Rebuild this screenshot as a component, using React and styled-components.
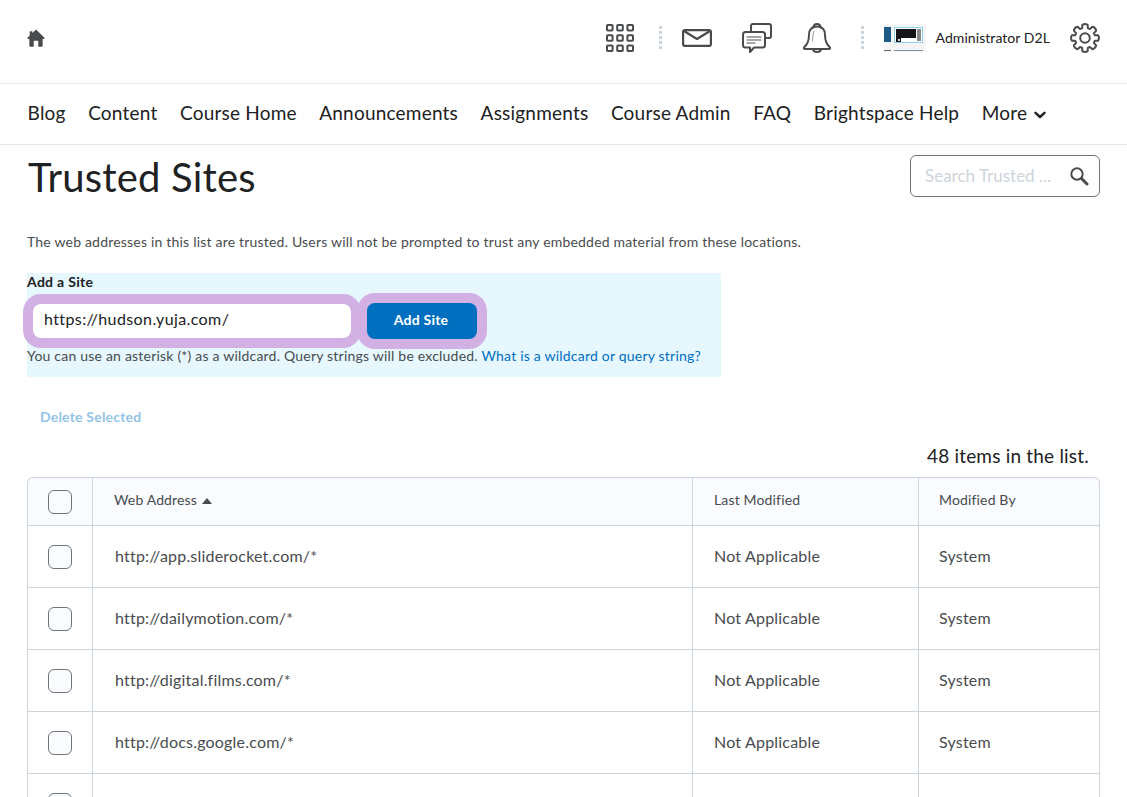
import React from 'react'
import styled, { createGlobalStyle } from 'styled-components'

const GlobalStyle = createGlobalStyle`
  html, body {
    margin: 0;
    height: 100%;
    overflow: hidden;
    background: #fff;
    font-family: Lato, "Open Sans", sans-serif;
    color: #202122;
  }
`

const navLinks = ['Blog', 'Content', 'Course Home', 'Announcements', 'Assignments', 'Course Admin', 'FAQ', 'Brightspace Help']

const rows = [
  'http://app.sliderocket.com/*',
  'http://dailymotion.com/*',
  'http://digital.films.com/*',
  'http://docs.google.com/*',
]

// 8 tooth cog outline, rounded off by the stroke join
function gearPath() {
  const pt = (r, a) => (15 + r * Math.cos(a)).toFixed(2) + ' ' + (15 + r * Math.sin(a)).toFixed(2)
  let d = ''
  for (let i = 0; i < 8; i++) {
    const a = (i * Math.PI) / 4 - Math.PI / 2
    d += (i === 0 ? 'M' : 'L') + pt(10.2, a - 0.28)
    d += 'L' + pt(13.4, a - 0.2)
    d += 'Q' + pt(14.8, a) + ' ' + pt(13.4, a + 0.2)
    d += 'L' + pt(10.2, a + 0.28)
    d += 'Q' + pt(10, a + Math.PI / 8) + ' ' + pt(10.2, a + Math.PI / 4 - 0.28)
  }
  return d + 'Z'
}

function HomeIcon() {
  return (
    <svg width="18" height="18" viewBox="0 0 20 20" fill="#494c4e">
      <path d="M10 .6 L19.4 9.6 Q19.9 10.8 19 11 H17.4 V18.4 Q17.4 19.6 16.2 19.6 H12.5 V13 H7.5 V19.6 H3.8 Q2.6 19.6 2.6 18.4 V11 H1 Q.1 10.8 .6 9.6 L3 7.3 V2.6 H6 V4.4 Z" />
    </svg>
  )
}

function GridIcon() {
  const cells = []
  for (let y = 0; y < 3; y++) {
    for (let x = 0; x < 3; x++) {
      cells.push(<rect key={x + '-' + y} x={1 + x * 10.2} y={1 + y * 10.2} width="5.6" height="5.6" rx="0.8" />)
    }
  }
  return (
    <svg width="28" height="28" viewBox="0 0 28 28" fill="none" stroke="#494c4e" strokeWidth="2">
      {cells}
    </svg>
  )
}

function MailIcon() {
  return (
    <svg width="30" height="18" viewBox="0 0 30 18" fill="none" stroke="#494c4e" strokeWidth="2.2" strokeLinejoin="round" strokeLinecap="round">
      <rect x="1.1" y="1.1" width="27.8" height="15.8" rx="2" />
      <path d="M2 2 L15 10 L28 2" />
    </svg>
  )
}

function ChatIcon() {
  return (
    <svg width="30" height="30" viewBox="0 0 30 30" fill="none" stroke="#494c4e" strokeWidth="2" strokeLinejoin="round" strokeLinecap="round">
      <path d="M9 8 V3 Q9 1 11 1 H27 Q29 1 29 3 V13 Q29 15 27 15 H24" />
      <path d="M3.5 9 H20.5 Q23 9 23 11.5 V22 Q23 24.5 20.5 24.5 H12 L8 29 V24.5 H3.5 Q1 24.5 1 22 V11.5 Q1 9 3.5 9 Z" />
      <path d="M5 14 H19 M5 17 H19 M5 20 H13" strokeWidth="1" />
    </svg>
  )
}

function BellIcon() {
  return (
    <svg width="30" height="30" viewBox="0 0 30 30" fill="none" stroke="#494c4e" strokeWidth="2" strokeLinejoin="round" strokeLinecap="round">
      <path d="M11.5 4.5 Q11.5 1 15 1 Q18.5 1 18.5 4.5" />
      <path d="M15 3.5 Q23 3.5 23 12 Q23 20 28 24.5 Q28.4 26 27 26 H3 Q1.6 26 2 24.5 Q7 20 7 12 Q7 3.5 15 3.5 Z" />
      <path d="M11 26 Q11.5 29 15 29 Q18.5 29 19 26" />
      <path d="M10.5 18 Q10.5 11 12 8" strokeWidth="1" stroke="#999" />
    </svg>
  )
}

function GearIcon() {
  return (
    <svg width="30" height="30" viewBox="0 0 30 30" fill="none" stroke="#494c4e" strokeWidth="2" strokeLinejoin="round">
      <circle cx="15" cy="15" r="4.8" />
      <path d={gearPath()} />
    </svg>
  )
}

function Thumbnail() {
  return (
    <svg width="42" height="28" viewBox="0 0 42 28">
      <rect width="42" height="28" fill="#f5f5f5" />
      <rect x="0" y="3" width="7" height="15" fill="#1d5a86" />
      <rect x="10" y="3" width="29" height="16" fill="#8fd0ea" />
      <rect x="11" y="4" width="27" height="14" fill="#fff" />
      <rect x="12" y="5" width="20" height="9" fill="#141418" />
      <rect x="12" y="14" width="5" height="4" fill="#141418" />
      <rect x="14" y="15" width="2" height="2" fill="#ddd" />
      <rect x="33" y="5" width="4" height="12" fill="#8a8a8a" />
      <rect x="0" y="26" width="7" height="1" fill="#666" />
      <rect x="10" y="26" width="29" height="1" fill="#7f97a8" />
    </svg>
  )
}

function SearchIcon() {
  return (
    <svg width="20" height="20" viewBox="0 0 20 20" fill="none" stroke="#494c4e" strokeLinecap="round">
      <circle cx="8" cy="8" r="5.7" strokeWidth="2" />
      <path d="M12.5 12.5 L18 18" strokeWidth="3" />
    </svg>
  )
}

function Chevron() {
  return (
    <svg width="12" height="8" viewBox="0 0 12 8" fill="none" stroke="#202122" strokeWidth="2.4" strokeLinecap="round" strokeLinejoin="round">
      <path d="M1.5 1.8 L6 6 L10.5 1.8" />
    </svg>
  )
}

function App() {
  return (
    <Page>
      <GlobalStyle />
      <TopBar>
        <HomeIcon />
        <TopActions>
          <GridSlot><GridIcon /></GridSlot>
          <Dots />
          <IconGroup>
            <MailIcon />
            <ChatIcon />
            <BellIcon />
          </IconGroup>
          <Dots />
          <Profile>
            <Thumbnail />
            <ProfileName>Administrator D2L</ProfileName>
          </Profile>
          <GearIcon />
        </TopActions>
      </TopBar>

      <NavBar>
        {navLinks.map((link) => (
          <NavLink key={link}>{link}</NavLink>
        ))}
        <NavLink>
          More <Chevron />
        </NavLink>
      </NavBar>

      <Content>
        <TitleRow>
          <Title>Trusted Sites</Title>
          <SearchBox>
            <SearchHint>Search Trusted ...</SearchHint>
            <SearchIcon />
          </SearchBox>
        </TitleRow>

        <Intro>The web addresses in this list are trusted. Users will not be prompted to trust any embedded material from these locations.</Intro>

        <AddPanel>
          <AddLabel>Add a Site</AddLabel>
          <AddRow>
            <SiteInput>https://hudson.yuja.com/</SiteInput>
            <AddButton>Add Site</AddButton>
          </AddRow>
          <Hint>
            You can use an asterisk (*) as a wildcard. Query strings will be excluded. <HintLink>What is a wildcard or query string?</HintLink>
          </Hint>
        </AddPanel>

        <DeleteLink>Delete Selected</DeleteLink>
        <ItemCount>48 items in the list.</ItemCount>

        <Table>
          <colgroup>
            <col style={{ width: 64 }} />
            <col style={{ width: 600 }} />
            <col style={{ width: 226 }} />
            <col />
          </colgroup>
          <thead>
            <tr>
              <HeadCell $center><Check /></HeadCell>
              <HeadCell>Web Address <SortArrow /></HeadCell>
              <HeadCell>Last Modified</HeadCell>
              <HeadCell>Modified By</HeadCell>
            </tr>
          </thead>
          <tbody>
            {rows.map((url) => (
              <tr key={url}>
                <BodyCell $center><Check /></BodyCell>
                <BodyCell>{url}</BodyCell>
                <BodyCell>Not Applicable</BodyCell>
                <BodyCell>System</BodyCell>
              </tr>
            ))}
            <tr>
              <BodyCell $center><Check /></BodyCell>
              <BodyCell />
              <BodyCell />
              <BodyCell />
            </tr>
          </tbody>
        </Table>
      </Content>
    </Page>
  )
}

const Page = styled.div`
  width: 1127px;
  height: 797px;
  overflow: hidden;
`

const TopBar = styled.header`
  height: 75px;
  border-bottom: 1px solid #e6e7e9;
  padding: 0 27px 8px 27px;
  display: flex;
  align-items: center;
  justify-content: space-between;
`

const TopActions = styled.div`
  display: flex;
  align-items: center;
  gap: 20px;
`

const GridSlot = styled.div`
  display: flex;
  margin-right: 5px;
`

const IconGroup = styled.div`
  display: flex;
  align-items: center;
  gap: 30px;
  margin-right: 9px;
`

const Dots = styled.span`
  width: 3px;
  height: 25px;
  background-image: radial-gradient(circle, #cdd5dc 1.5px, transparent 1.6px);
  background-size: 3px 5px;
`

const Profile = styled.div`
  display: flex;
  align-items: center;
  gap: 10px;
`

const ProfileName = styled.span`
  font-size: 14px;
  letter-spacing: 0.06px;
  color: #202122;
`

const NavBar = styled.nav`
  height: 56px;
  border-bottom: 1px solid #e6e7e9;
  padding: 0 27.6px 4px;
  display: flex;
  align-items: center;
  gap: 22.6px;
`

const NavLink = styled.a`
  font-size: 19px;
  letter-spacing: 0.2px;
  color: #202122;
  white-space: nowrap;

  svg {
    margin-left: 2px;
    vertical-align: 1px;
  }
`

const Content = styled.main`
  padding: 0 27px;
`

const TitleRow = styled.div`
  height: 71px;
  display: flex;
  justify-content: space-between;
  align-items: flex-start;
  background: linear-gradient(#f9fafb, #fff 6px);
  margin: 0 -27px;
  padding: 0 27px;
`

const Title = styled.h1`
  margin: 8px 0 0 1px;
  font-size: 40px;
  line-height: 48px;
  font-weight: 400;
  letter-spacing: 0.2px;
  color: #202122;
`

const SearchBox = styled.div`
  width: 190px;
  height: 42px;
  margin-top: 10px;
  box-sizing: border-box;
  border: 1px solid #6e7477;
  border-radius: 6px;
  background: #fff;
  padding: 0 10px 0 14px;
  display: flex;
  align-items: center;
  justify-content: space-between;
`

const SearchHint = styled.span`
  font-size: 17px;
  padding-bottom: 1px;
  color: #cdd5dc;
`

const Intro = styled.p`
  margin: 0;
  height: 57px;
  padding-top: 17px;
  box-sizing: border-box;
  font-size: 14px;
  letter-spacing: 0.2px;
  line-height: 18px;
  color: #494c4e;
`

const AddPanel = styled.section`
  width: 694px;
  height: 104px;
  background: #e6f7fe;
`

const AddLabel = styled.div`
  height: 20px;
  font-size: 14px;
  letter-spacing: 0.3px;
  line-height: 18px;
  font-weight: 700;
  color: #202122;
`

const AddRow = styled.div`
  padding-top: 11px;
  height: 35px;
  display: flex;
  align-items: flex-start;
  gap: 16px;
  margin-left: 6px;
`

const SiteInput = styled.div`
  width: 318px;
  height: 34px;
  box-sizing: border-box;
  padding-left: 11px;
  border-radius: 8px;
  background: #fff;
  box-shadow: 0 0 0 10px #d2b0e4;
  font-size: 16px;
  line-height: 30px;
  letter-spacing: 0.4px;
  color: #202122;
`

const AddButton = styled.button`
  width: 110px;
  height: 36px;
  margin-top: -1px;
  border: 0;
  border-radius: 8px;
  padding: 0 2px 4px 0;
  background: #006fbf;
  box-shadow: 0 0 0 10px #d2b0e4;
  position: relative;
  font-family: inherit;
  font-size: 14px;
  letter-spacing: 0.25px;
  font-weight: 700;
  color: #fff;
`

const Hint = styled.p`
  margin: 0;
  padding-top: 8px;
  font-size: 14px;
  letter-spacing: 0.21px;
  line-height: 18px;
  color: #494c4e;
  position: relative;
`

const HintLink = styled.a`
  color: #006fbf;
`

const DeleteLink = styled.div`
  padding: 31px 0 0 13px;
  font-size: 14px;
  letter-spacing: 0.2px;
  line-height: 18px;
  font-weight: 700;
  color: #93c4e6;
`

const ItemCount = styled.div`
  margin-top: 18px;
  padding-right: 11px;
  text-align: right;
  font-size: 19px;
  line-height: 24px;
  color: #202122;
  letter-spacing: 0.2px;
`

const Table = styled.table`
  margin-top: 9px;
  width: 1073px;
  table-layout: fixed;
  border-collapse: separate;
  border-spacing: 0;
  border: 1px solid #cdd5dc;
  border-bottom: 0;
  border-radius: 6px 6px 0 0;
`

const HeadCell = styled.th`
  box-sizing: border-box;
  height: 48px;
  padding: ${(p) => (p.$center ? '0' : '0 20px 5px 21px')};
  background: #f9fbff;
  border-bottom: 1px solid #cdd5dc;
  border-left: 1px solid #cdd5dc;
  text-align: ${(p) => (p.$center ? 'center' : 'left')};
  font-size: 14px;
  letter-spacing: 0.15px;
  font-weight: 400;
  color: #494c4e;

  &:first-child {
    border-left: 0;
    border-top-left-radius: 6px;
  }

  &:last-child {
    border-top-right-radius: 6px;
    padding-left: 20px;
  }
`

const BodyCell = styled.td`
  box-sizing: border-box;
  height: 62px;
  padding: ${(p) => (p.$center ? '0' : '0 21px 2px')};
  border-bottom: 1px solid #cdd5dc;
  border-left: 1px solid #cdd5dc;
  text-align: ${(p) => (p.$center ? 'center' : 'left')};
  font-size: 16px;
  letter-spacing: 0.2px;
  color: #494c4e;

  &:first-child {
    border-left: 0;
  }

  &:nth-child(2) {
    padding-left: 22px;
  }

  &:last-child {
    padding-left: 20px;
  }
`

const Check = styled.span`
  display: block;
  width: 24px;
  height: 24px;
  box-sizing: border-box;
  margin: 0 auto;
  border: 1px solid #6e7477;
  border-radius: 6px;
  background: #f9fbff;
`

const SortArrow = styled.span`
  display: inline-block;
  width: 0;
  height: 0;
  margin-left: 1px;
  vertical-align: 1px;
  border-left: 5px solid transparent;
  border-right: 5px solid transparent;
  border-bottom: 6px solid #494c4e;
`

export default App
